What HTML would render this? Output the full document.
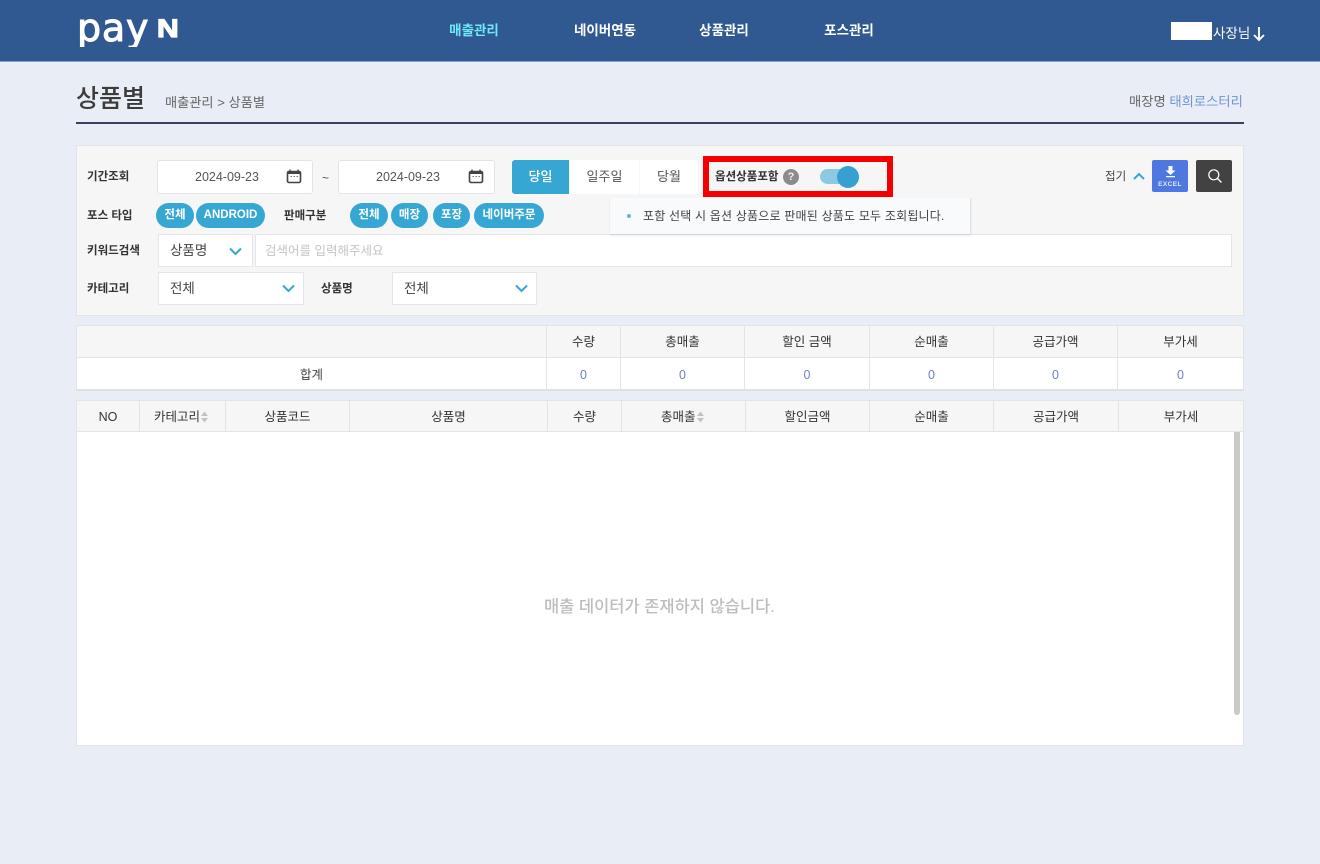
<!DOCTYPE html>
<html lang="ko"><head><meta charset="utf-8"><title>상품별</title>
<style>
html,body{margin:0;padding:0;width:1320px;height:864px;overflow:hidden;background:#e9edf5;font-family:"Liberation Sans","Noto Sans CJK KR",sans-serif;color:#333}
div,span{position:absolute;box-sizing:border-box;white-space:nowrap}
.t{line-height:20px;height:20px;text-align:center}
.nav{top:21px;font-size:13.5px;font-weight:700;color:#fff;width:90px}
.lb{font-size:11.5px;font-weight:700;color:#333;text-align:left}
.box{background:#fff;border:1px solid #e2e4e8;border-radius:3px}
.pill{background:#36a6d3;color:#fff;font-weight:700;font-size:11.5px;height:25px;line-height:25px;border-radius:13px;top:203px;text-align:center}
.sel{font-size:13.5px;color:#444;line-height:31px;padding-left:11px;height:33px;background:#fff;border:1px solid #e4e6ea}
.th{background:#f6f6f6;font-size:12.5px;color:#333;text-align:center;border-right:1px solid #e2e4e8;border-bottom:1px solid #e2e4e8}
.td{background:#fff;font-size:12.5px;text-align:center;border-right:1px solid #e2e4e8;color:#6f7fc9;border-bottom:2px solid #dfe1e5}
</style></head><body>
<div style="left:0;top:0;width:1320px;height:62px;background:#305991;border-bottom:1px solid #7ea3cf"></div>
<div style="left:77px;top:7px;height:40px;overflow:hidden;line-height:43px;font-family:'DejaVu Sans',sans-serif;font-size:38px;color:#fff;letter-spacing:.8px;-webkit-text-stroke:1px #fff">pay</div>
<div style="left:157px;top:11px;height:36px;line-height:36px;font-family:'Liberation Sans',sans-serif;font-size:25px;font-weight:700;color:#fff;-webkit-text-stroke:1.2px #fff;transform:scaleX(1.2);transform-origin:left center">N</div>
<div class="t nav" style="left:429px;color:#6fe9f7">매출관리</div>
<div class="t nav" style="left:560px">네이버연동</div>
<div class="t nav" style="left:679px">상품관리</div>
<div class="t nav" style="left:804px">포스관리</div>
<div style="left:1171px;top:22px;width:41px;height:18px;background:#fff"></div>
<div class="t" style="left:1213px;top:24px;font-size:13.5px;color:#fff">사장님</div>
<svg style="position:absolute;left:1252px;top:26px" width="14" height="16" viewBox="0 0 14 16"><path d="M7 1V14M2 9L7 14L12 9" fill="none" stroke="#fff" stroke-width="1.9"/></svg>

<div class="t" style="left:76px;top:86px;height:26px;line-height:26px;font-size:25px;color:#3c3c3c;font-weight:500">상품별</div>
<div class="t" style="left:165px;top:93px;font-size:13.2px;color:#666">매출관리 &gt; 상품별</div>
<div class="t" style="left:1129px;top:92px;font-size:13.3px;color:#666">매장명 <span style="position:static;color:#6f95d6">태희로스터리</span></div>
<div style="left:76px;top:122px;width:1168px;height:2px;background:#3b3f5c"></div>

<div style="left:76px;top:145px;width:1168px;height:171px;background:#f6f6f6;border:1px solid #e2e4e8"></div>
<div class="t lb" style="left:87px;top:167px">기간조회</div>
<div class="box" style="left:157px;top:160px;width:156px;height:34px"></div>
<div class="t" style="left:195px;top:167px;font-size:12.5px;color:#555">2024-09-23</div>
<svg style="position:absolute;left:286px;top:169px" width="16" height="15" viewBox="0 0 16 15"><rect x="1.500" y="2.500" width="13" height="11" rx="1.500" fill="none" stroke="#444" stroke-width="1.600"/><rect x="1.500" y="2" width="13" height="3" fill="#444"/><path d="M4 0.500V3M12 0.500V3" stroke="#444" stroke-width="1.400"/><path d="M4.500 7.500H6M7.500 7.500H9M10.500 7.500H12" stroke="#777"/></svg>
<div class="t" style="left:322px;top:168px;font-size:12px;color:#555">~</div>
<div class="box" style="left:338px;top:160px;width:157px;height:34px"></div>
<div class="t" style="left:376px;top:167px;font-size:12.5px;color:#555">2024-09-23</div>
<svg style="position:absolute;left:468px;top:169px" width="16" height="15" viewBox="0 0 16 15"><rect x="1.500" y="2.500" width="13" height="11" rx="1.500" fill="none" stroke="#444" stroke-width="1.600"/><rect x="1.500" y="2" width="13" height="3" fill="#444"/><path d="M4 0.500V3M12 0.500V3" stroke="#444" stroke-width="1.400"/><path d="M4.500 7.500H6M7.500 7.500H9M10.500 7.500H12" stroke="#777"/></svg>

<div style="left:512px;top:160px;width:57px;height:34px;background:#36a6d3;border-radius:3px 0 0 3px;color:#fff;font-size:13px;font-weight:500;line-height:34px;text-align:center">당일</div>
<div style="left:570px;top:160px;width:69px;height:34px;background:#fff;font-size:13px;color:#555;line-height:34px;text-align:center">일주일</div>
<div style="left:640px;top:160px;width:58px;height:34px;background:#fff;border-radius:0 3px 3px 0;font-size:13px;color:#555;line-height:34px;text-align:center">당월</div>

<div style="left:703px;top:156px;width:190px;height:41px;border:6px solid #f40000"></div>
<div class="t lb" style="left:715px;top:167px">옵션상품포함</div>
<div style="left:783px;top:169px;width:16px;height:16px;border-radius:50%;background:#8c8c8c;color:#eee;font-size:11px;font-weight:700;line-height:16px;text-align:center">?</div>
<div style="left:820px;top:169px;width:34px;height:15px;border-radius:8px;background:#8cc9e2"></div>
<div style="left:837px;top:166px;width:22px;height:22px;border-radius:50%;background:#36a0d2"></div>

<div style="left:610px;top:198px;width:361px;height:37px;background:#f9fafc;border-right:1px solid #dfe1e6;border-bottom:1px solid #d3d6dc;box-shadow:0 1px 2px rgba(0,0,0,.08);z-index:3"></div>
<div style="left:627px;top:214px;width:4px;height:4px;border-radius:50%;background:#6bb4c8;z-index:4"></div>
<div class="t" style="left:643px;top:206px;font-size:12px;color:#444;z-index:4;letter-spacing:.2px">포함 선택 시 옵션 상품으로 판매된 상품도 모두 조회됩니다.</div>

<div class="t" style="left:1105px;top:167px;font-size:11.5px;color:#444">접기</div>
<svg style="position:absolute;left:1133px;top:172px" width="12" height="9" viewBox="0 0 12 9"><path d="M1 7L6 2L11 7" fill="none" stroke="#36a6d3" stroke-width="2"/></svg>
<div style="left:1152px;top:160px;width:36px;height:32px;background:#4f77e0;border-radius:2px"></div>
<svg style="position:absolute;left:1165px;top:166px" width="11" height="12" viewBox="0 0 11 12"><path d="M3.500 0H7.500V4.500H10.500L5.500 9L0.500 4.500H3.500ZM1 10H10V11.200H1Z" fill="#fff"/></svg>
<div style="left:1152px;top:179px;width:36px;height:11px;line-height:11px;text-align:center;font-size:6.500px;font-weight:700;color:#dfe8ff;letter-spacing:.4px">EXCEL</div>
<div style="left:1196px;top:160px;width:36px;height:32px;background:#424242;border-radius:2px"></div>
<svg style="position:absolute;left:1207px;top:168px" width="16" height="16" viewBox="0 0 16 16"><circle cx="6.800" cy="6.800" r="5" fill="none" stroke="#fff" stroke-width="1.200"/><path d="M10.500 10.500L14.500 14.500" stroke="#fff" stroke-width="1.300"/></svg>

<div class="t lb" style="left:87px;top:206px">포스 타입</div>
<div class="pill" style="left:156px;width:38px">전체</div>
<div class="pill" style="left:196px;width:69px">ANDROID</div>
<div class="t lb" style="left:284px;top:206px">판매구분</div>
<div class="pill" style="left:350px;width:38px">전체</div>
<div class="pill" style="left:391px;width:37px">매장</div>
<div class="pill" style="left:433px;width:37px">포장</div>
<div class="pill" style="left:474px;width:70px">네이버주문</div>

<div class="t lb" style="left:87px;top:241px">키워드검색</div>
<div class="sel" style="left:158px;top:234px;width:95px">상품명</div>
<svg style="position:absolute;left:229px;top:247px" width="13" height="9" viewBox="0 0 13 9"><path d="M1 1.500L6.500 7L12 1.500" fill="none" stroke="#36a6d3" stroke-width="2"/></svg>
<div style="left:255px;top:234px;width:977px;height:33px;background:#fff;border:1px solid #e4e6ea;font-size:12.500px;color:#c4c4c4;line-height:33px;padding-left:9px">검색어를 입력해주세요</div>

<div class="t lb" style="left:87px;top:279px">카테고리</div>
<div class="sel" style="left:158px;top:272px;width:146px">전체</div>
<svg style="position:absolute;left:282px;top:284px" width="13" height="9" viewBox="0 0 13 9"><path d="M1 1.500L6.500 7L12 1.500" fill="none" stroke="#36a6d3" stroke-width="2"/></svg>
<div class="t lb" style="left:321px;top:279px">상품명</div>
<div class="sel" style="left:392px;top:272px;width:145px">전체</div>
<svg style="position:absolute;left:515px;top:284px" width="13" height="9" viewBox="0 0 13 9"><path d="M1 1.500L6.500 7L12 1.500" fill="none" stroke="#36a6d3" stroke-width="2"/></svg>

<!-- summary table -->
<div class="th" style="left:76px;top:325px;width:471px;height:33px;border-left:1px solid #e2e4e8;border-top:1px solid #e2e4e8"></div>
<div class="th" style="left:547px;top:325px;width:74px;height:33px;line-height:32px;border-top:1px solid #e2e4e8">수량</div>
<div class="th" style="left:621px;top:325px;width:124px;height:33px;line-height:32px;border-top:1px solid #e2e4e8">총매출</div>
<div class="th" style="left:745px;top:325px;width:125px;height:33px;line-height:32px;border-top:1px solid #e2e4e8">할인 금액</div>
<div class="th" style="left:870px;top:325px;width:124px;height:33px;line-height:32px;border-top:1px solid #e2e4e8">순매출</div>
<div class="th" style="left:994px;top:325px;width:124px;height:33px;line-height:32px;border-top:1px solid #e2e4e8">공급가액</div>
<div class="th" style="left:1118px;top:325px;width:126px;height:33px;line-height:32px;border-top:1px solid #e2e4e8">부가세</div>
<div class="td" style="left:76px;top:358px;width:471px;height:33px;line-height:35px;color:#444;border-left:1px solid #e2e4e8">합계</div>
<div class="td" style="left:547px;top:358px;width:74px;height:33px;line-height:34px">0</div>
<div class="td" style="left:621px;top:358px;width:124px;height:33px;line-height:34px">0</div>
<div class="td" style="left:745px;top:358px;width:125px;height:33px;line-height:34px">0</div>
<div class="td" style="left:870px;top:358px;width:124px;height:33px;line-height:34px">0</div>
<div class="td" style="left:994px;top:358px;width:124px;height:33px;line-height:34px">0</div>
<div class="td" style="left:1118px;top:358px;width:126px;height:33px;line-height:34px">0</div>

<!-- list table -->
<div style="left:76px;top:431px;width:1168px;height:315px;background:#fff;border:1px solid #e2e4e8"></div>
<div class="th" style="left:76px;top:400px;width:64px;height:32px;line-height:32px;border-left:1px solid #e2e4e8;border-top:1px solid #e2e4e8">NO</div>
<div class="th" style="left:140px;top:400px;width:86px;height:32px;line-height:33px;border-top:1px solid #e2e4e8;text-align:left;padding-left:14px">카테고리</div>
<svg style="position:absolute;left:200px;top:411px" width="9" height="12" viewBox="0 0 9 12"><path d="M4.500 0.500L8 5H1ZM4.500 11.500L8 7H1Z" fill="#c4c0c8"/></svg>
<div class="th" style="left:226px;top:400px;width:124px;height:32px;line-height:33px;border-top:1px solid #e2e4e8">상품코드</div>
<div class="th" style="left:350px;top:400px;width:198px;height:32px;line-height:33px;border-top:1px solid #e2e4e8">상품명</div>
<div class="th" style="left:548px;top:400px;width:74px;height:32px;line-height:33px;border-top:1px solid #e2e4e8">수량</div>
<div class="th" style="left:622px;top:400px;width:124px;height:32px;line-height:33px;border-top:1px solid #e2e4e8;text-align:left;padding-left:39px">총매출</div>
<svg style="position:absolute;left:696px;top:411px" width="9" height="12" viewBox="0 0 9 12"><path d="M4.500 0.500L8 5H1ZM4.500 11.500L8 7H1Z" fill="#c4c0c8"/></svg>
<div class="th" style="left:746px;top:400px;width:124px;height:32px;line-height:33px;border-top:1px solid #e2e4e8">할인금액</div>
<div class="th" style="left:870px;top:400px;width:124px;height:32px;line-height:33px;border-top:1px solid #e2e4e8">순매출</div>
<div class="th" style="left:994px;top:400px;width:125px;height:32px;line-height:33px;border-top:1px solid #e2e4e8">공급가액</div>
<div class="th" style="left:1119px;top:400px;width:125px;height:32px;line-height:33px;border-top:1px solid #e2e4e8">부가세</div>
<div style="left:1234px;top:432px;width:6px;height:283px;background:#c9c9c9;border-radius:0 0 3px 3px"></div>
<div class="t" style="left:544px;top:597px;font-size:16.500px;color:#bdbdbd;font-weight:500">매출 데이터가 존재하지 않습니다.</div>
</body></html>
